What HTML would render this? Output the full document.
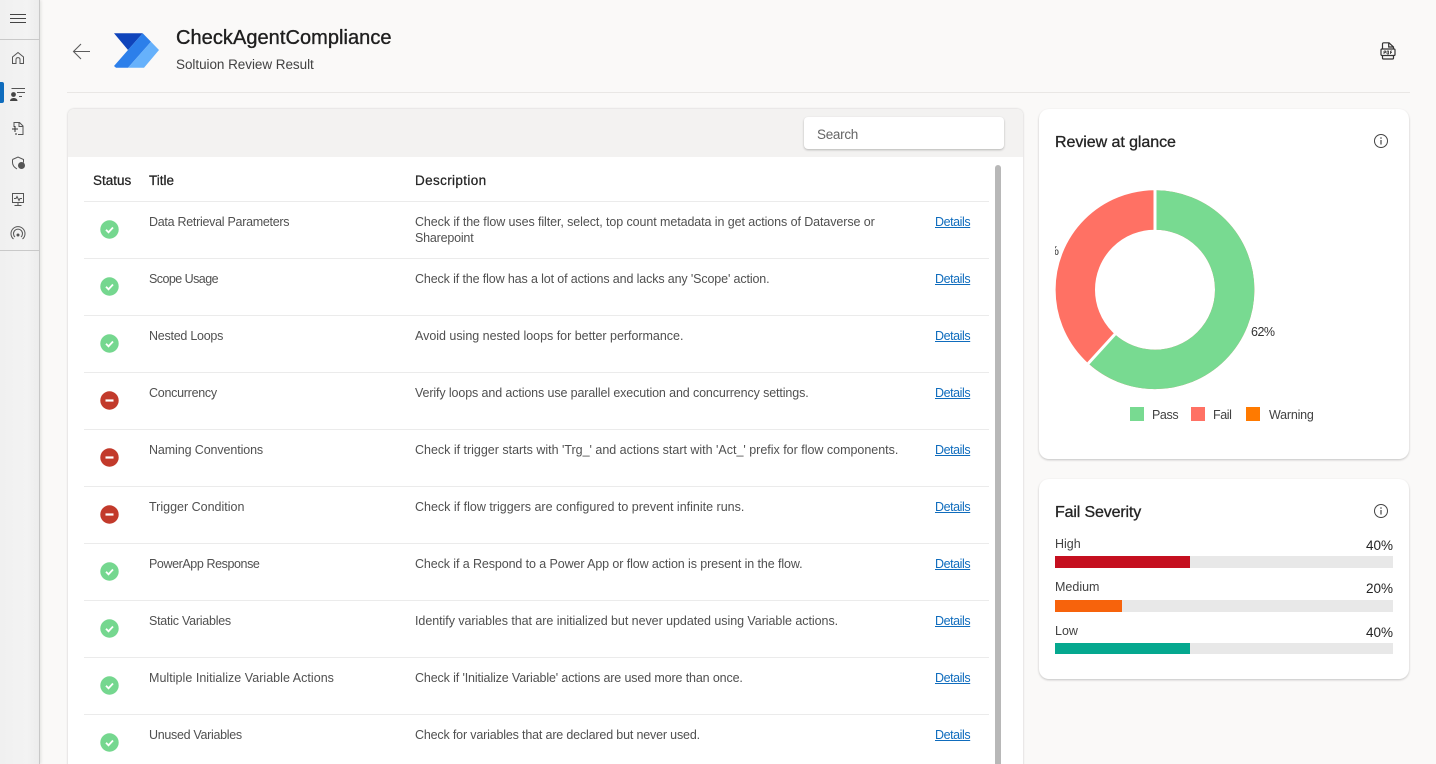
<!DOCTYPE html>
<html><head><meta charset="utf-8">
<style>
html,body{margin:0;padding:0;width:1436px;height:764px;overflow:hidden;background:#faf9f8;font-family:"Liberation Sans",sans-serif;color:#242424}
#w{position:relative;width:1436px;height:764px;overflow:hidden}
.a{position:absolute;white-space:nowrap}
.t{font-size:12.5px;line-height:16px;color:#505050}
.h{font-size:13.5px;line-height:18px;font-weight:400;color:#242424;-webkit-text-stroke:.25px #242424}
.l{height:1px;background:#ebebeb;left:84px;width:905px}
.d{font-size:12.5px;line-height:16px;color:#0f6cbd;text-decoration:underline;left:935px;letter-spacing:-.43px}
.card{background:#fff;border-radius:10px;box-shadow:0 1px 2px rgba(0,0,0,.22)}
.ct{font-size:16px;line-height:22px;color:#242424;-webkit-text-stroke:.3px #242424}
.sm{font-size:12.5px;line-height:16px;color:#424242}
.pc{font-size:13.5px;line-height:18px;color:#242424;text-align:right}
</style></head><body><div id="w">

<!-- sidebar -->
<div class="a" style="left:0;top:0;width:39px;height:764px;background:linear-gradient(90deg,#f0f0f0,#f3f3f3 70%,#ececec);border-right:1px solid #c8c8c8;box-shadow:1px 0 3px rgba(0,0,0,.1)"></div>
<div class="a" style="left:0;top:39px;width:39px;height:1px;background:#c9c9c9"></div>
<div class="a" style="left:0;top:250px;width:39px;height:1px;background:#c9c9c9"></div>
<div class="a" style="left:0;top:82px;width:4px;height:21px;background:#0f6cbd;border-radius:0 2px 2px 0"></div>
<svg class="a" style="left:0;top:0" width="40" height="250" fill="none" stroke="#555" stroke-width="1">
<path d="M10 14.500h16M10 18.500h16M10 22.500h16" stroke="#444"/>
<path d="M12.500 63.500v-6.500l5.500-4.500 5.500 4.500v6.500h-3.500v-4c0-2.500-4-2.500-4 0v4z"/>
<path d="M11.500 88.500h13.500M17 92.500h8M19 96.500h3"/>
<circle cx="13.500" cy="94.500" r="2.400" fill="#444" stroke="none"/><path d="M10 101c0-4 7.500-4 7.500 0z" fill="#444" stroke="none"/>
<path d="M14 127v-4.500h5.500l3.500 3.500v8.500h-5M19 122.500v4h4"/><path d="M15 126v6M12 129h6M16 133v2" stroke="#333"/>
<path d="M12.500 159.500l5.500-2.500 5.500 2.500v3M12.500 159.500v3c0 3 2 5 4.500 6.500"/><circle cx="21.500" cy="165.500" r="3.500" fill="#555" stroke="none"/>
<path d="M12.500 193.500h11v9h-11zM18 202.500v2.500M14.500 205.500h7M14 198.500h2l1-2 2 4 1-2h2"/>
<circle cx="18" cy="235" r="1.500" fill="#555" stroke="none"/><path d="M15 237a4.500 4.500 0 1 1 6 0M13.500 239a7 7 0 1 1 9 0"/>
</svg>

<!-- header -->
<svg class="a" style="left:72px;top:42px" width="20" height="18" fill="none" stroke="#5c5c5c" stroke-width="1.100"><path d="M1.500 9.500H18M9 2L1.500 9.500 9 17"/></svg>
<svg class="a" style="left:113px;top:33px" width="47" height="36">
<polygon points="1,0.300 29.700,0.300 15,17" fill="#0f44bb"/>
<polygon points="29.700,0.300 38,8.700 15,34.700 3,34.700 1,33 15,17" fill="#2c7fea"/>
<polygon points="38,8.700 46,17 31,34.700 15,34.700" fill="#66b1fb"/>
</svg>
<div class="a" style="left:176px;top:25px;font-size:20px;line-height:26px;color:#1f1f1f;-webkit-text-stroke:.35px #1f1f1f;letter-spacing:.05px">CheckAgentCompliance</div>
<div class="a" style="left:176px;top:56px;font-size:13.500px;line-height:18px;color:#424242;letter-spacing:-.05px">Soltuion Review Result</div>
<svg class="a" style="left:1380px;top:42px" width="16" height="18" fill="none" stroke="#333" stroke-width="1.200"><path d="M2.500 7V2c0-.8.500-1.200 1.200-1.200h5.300L13.500 5v2M8.700 1v4h4.800"/><rect x="1" y="7" width="14" height="6.500" rx="1"/><path d="M2.500 13.500v2.500c0 .6.500 1 1 1h9c.5 0 1-.4 1-1v-2.500"/><path d="M4 9v3M7 9v3M10.500 9v3M4 9h1.500v1.500H4M7 9h1.500v3H7M10.500 9H12M10.500 10.500H12" stroke-width=".8"/></svg>
<div class="a" style="left:67px;top:92px;width:1343px;height:1px;background:#e9e7e5"></div>

<!-- table card -->
<div class="a" style="left:68px;top:109px;width:955px;height:660px;background:#fff;border-radius:6px 6px 0 0;box-shadow:0 0 2px rgba(0,0,0,.2)"></div>
<div class="a" style="left:68px;top:109px;width:955px;height:48px;background:#f3f2f1;border-radius:6px 6px 0 0"></div>
<div class="a" style="left:804px;top:117px;width:200px;height:32px;background:#fff;border-radius:4px;box-shadow:0 1px 2px rgba(0,0,0,.25)"></div>
<div class="a" style="left:817px;top:126px;font-size:13.500px;line-height:18px;color:#666;letter-spacing:-.3px">Search</div>
<div class="a" style="left:995px;top:165px;width:6px;height:599px;background:#b8b8b8;border-radius:3px 3px 0 0"></div>

<div class="a h" style="left:93px;top:172px">Status</div>
<div class="a h" style="left:149px;top:172px">Title</div>
<div class="a h" style="left:415px;top:172px;letter-spacing:.36px">Description</div>
<div class="a l" style="top:201px"></div>
<div class="a l" style="top:258px"></div>
<div class="a l" style="top:315px"></div>
<div class="a l" style="top:372px"></div>
<div class="a l" style="top:429px"></div>
<div class="a l" style="top:486px"></div>
<div class="a l" style="top:543px"></div>
<div class="a l" style="top:600px"></div>
<div class="a l" style="top:657px"></div>
<div class="a l" style="top:714px"></div>

<svg class="a" style="left:100px;top:210px" width="20" height="554">
<circle cx="9.500" cy="19.500" r="9.200" fill="#75d78f"/><path d="M6 19.800l2.500 2.500 4.500-4.800" stroke="#fff" stroke-width="1.800" fill="none"/>
<circle cx="9.500" cy="76.500" r="9.200" fill="#75d78f"/><path d="M6 76.800l2.500 2.500 4.500-4.800" stroke="#fff" stroke-width="1.800" fill="none"/>
<circle cx="9.500" cy="133.500" r="9.200" fill="#75d78f"/><path d="M6 133.800l2.500 2.500 4.500-4.800" stroke="#fff" stroke-width="1.800" fill="none"/>
<circle cx="9.500" cy="190.500" r="9.200" fill="#c23a2b"/><path d="M5.500 190.500h8" stroke="#fff" stroke-width="2.200"/>
<circle cx="9.500" cy="247.500" r="9.200" fill="#c23a2b"/><path d="M5.500 247.500h8" stroke="#fff" stroke-width="2.200"/>
<circle cx="9.500" cy="304.500" r="9.200" fill="#c23a2b"/><path d="M5.500 304.500h8" stroke="#fff" stroke-width="2.200"/>
<circle cx="9.500" cy="361.500" r="9.200" fill="#75d78f"/><path d="M6 361.800l2.500 2.500 4.500-4.800" stroke="#fff" stroke-width="1.800" fill="none"/>
<circle cx="9.500" cy="418.500" r="9.200" fill="#75d78f"/><path d="M6 418.800l2.500 2.500 4.500-4.800" stroke="#fff" stroke-width="1.800" fill="none"/>
<circle cx="9.500" cy="475.500" r="9.200" fill="#75d78f"/><path d="M6 475.800l2.500 2.500 4.500-4.800" stroke="#fff" stroke-width="1.800" fill="none"/>
<circle cx="9.500" cy="532.500" r="9.200" fill="#75d78f"/><path d="M6 532.800l2.500 2.500 4.500-4.800" stroke="#fff" stroke-width="1.800" fill="none"/>
</svg>

<div class="a t" style="left:149px;top:214px;letter-spacing:-.28px">Data Retrieval Parameters</div>
<div class="a t" style="left:415px;top:214px;letter-spacing:-.09px">Check if the flow uses filter, select, top count metadata in get actions of Dataverse or</div>
<div class="a t" style="left:415px;top:230px;letter-spacing:-.2px">Sharepoint</div>
<div class="a d" style="top:214px">Details</div>

<div class="a t" style="left:149px;top:271px;letter-spacing:-.55px">Scope Usage</div>
<div class="a t" style="left:415px;top:271px;letter-spacing:-.13px">Check if the flow has a lot of actions and lacks any 'Scope' action.</div>
<div class="a d" style="top:271px">Details</div>

<div class="a t" style="left:149px;top:328px;letter-spacing:-.25px">Nested Loops</div>
<div class="a t" style="left:415px;top:328px;letter-spacing:-.02px">Avoid using nested loops for better performance.</div>
<div class="a d" style="top:328px">Details</div>

<div class="a t" style="left:149px;top:385px;letter-spacing:-.27px">Concurrency</div>
<div class="a t" style="left:415px;top:385px;letter-spacing:-.12px">Verify loops and actions use parallel execution and concurrency settings.</div>
<div class="a d" style="top:385px">Details</div>

<div class="a t" style="left:149px;top:442px;letter-spacing:-.11px">Naming Conventions</div>
<div class="a t" style="left:415px;top:442px;letter-spacing:-.01px">Check if trigger starts with 'Trg_' and actions start with 'Act_' prefix for flow components.</div>
<div class="a d" style="top:442px">Details</div>

<div class="a t" style="left:149px;top:499px">Trigger Condition</div>
<div class="a t" style="left:415px;top:499px">Check if flow triggers are configured to prevent infinite runs.</div>
<div class="a d" style="top:499px">Details</div>

<div class="a t" style="left:149px;top:556px;letter-spacing:-.41px">PowerApp Response</div>
<div class="a t" style="left:415px;top:556px;letter-spacing:-.1px">Check if a Respond to a Power App or flow action is present in the flow.</div>
<div class="a d" style="top:556px">Details</div>

<div class="a t" style="left:149px;top:613px;letter-spacing:-.25px">Static Variables</div>
<div class="a t" style="left:415px;top:613px;letter-spacing:-.05px">Identify variables that are initialized but never updated using Variable actions.</div>
<div class="a d" style="top:613px">Details</div>

<div class="a t" style="left:149px;top:670px;letter-spacing:.03px">Multiple Initialize Variable Actions</div>
<div class="a t" style="left:415px;top:670px;letter-spacing:-.13px">Check if 'Initialize Variable' actions are used more than once.</div>
<div class="a d" style="top:670px">Details</div>

<div class="a t" style="left:149px;top:727px;letter-spacing:-.31px">Unused Variables</div>
<div class="a t" style="left:415px;top:727px;letter-spacing:-.17px">Check for variables that are declared but never used.</div>
<div class="a d" style="top:727px">Details</div>

<!-- review card -->
<div class="a card" style="left:1039px;top:109px;width:370px;height:350px"></div>
<div class="a ct" style="left:1055px;top:132px;letter-spacing:-.06px">Review at glance</div>
<svg class="a" style="left:1373px;top:133px" width="16" height="16" fill="none" stroke="#444" stroke-width="1"><circle cx="8" cy="8" r="6.500"/><path d="M8 7v4.500" stroke-width="1.200"/><circle cx="8" cy="5" r=".8" fill="#444" stroke="none"/></svg>
<svg class="a" style="left:1050px;top:185px" width="210" height="210">
<circle cx="105" cy="104.700" r="79.700" fill="none" stroke="#ff7164" stroke-width="39.400"/>
<circle cx="105" cy="104.700" r="79.700" fill="none" stroke="#78da91" stroke-width="39.400" stroke-dasharray="309.200 500.800" transform="rotate(-90 105 104.700)"/>
<path d="M105 3v44" stroke="#fff" stroke-width="3"/>
<path d="M66 148L36.400 180.500" stroke="#fff" stroke-width="3"/>
</svg>
<div class="a" style="left:1055px;top:243px;width:4px;height:16px;overflow:hidden"><span class="a" style="right:0;font-size:12.500px;line-height:16px;color:#333">38%</span></div>
<div class="a sm" style="left:1251px;top:324px;color:#333;letter-spacing:-.5px">62%</div>
<div class="a" style="left:1130px;top:407px;width:14px;height:14px;background:#78da91"></div>
<div class="a sm" style="left:1152px;top:407px;letter-spacing:-.4px">Pass</div>
<div class="a" style="left:1191px;top:407px;width:14px;height:14px;background:#ff7164"></div>
<div class="a sm" style="left:1213px;top:407px;letter-spacing:-.4px">Fail</div>
<div class="a" style="left:1246px;top:407px;width:14px;height:14px;background:#ff7a00"></div>
<div class="a sm" style="left:1269px;top:407px;letter-spacing:-.2px">Warning</div>

<!-- severity card -->
<div class="a card" style="left:1039px;top:479px;width:370px;height:200px"></div>
<div class="a ct" style="left:1055px;top:502px;letter-spacing:-.15px">Fail Severity</div>
<svg class="a" style="left:1373px;top:503px" width="16" height="16" fill="none" stroke="#444" stroke-width="1"><circle cx="8" cy="8" r="6.500"/><path d="M8 7v4.500" stroke-width="1.200"/><circle cx="8" cy="5" r=".8" fill="#444" stroke="none"/></svg>

<div class="a sm" style="left:1055px;top:536px">High</div>
<div class="a pc" style="left:1333px;width:60px;top:537px">40%</div>
<div class="a" style="left:1055px;top:556px;width:338px;height:12px;background:#e8e8e8"></div>
<div class="a" style="left:1055px;top:556px;width:135px;height:12px;background:#c50f1f"></div>

<div class="a sm" style="left:1055px;top:579px">Medium</div>
<div class="a pc" style="left:1333px;width:60px;top:580px">20%</div>
<div class="a" style="left:1055px;top:600px;width:338px;height:12px;background:#e8e8e8"></div>
<div class="a" style="left:1055px;top:600px;width:67px;height:12px;background:#f7630c"></div>

<div class="a sm" style="left:1055px;top:623px">Low</div>
<div class="a pc" style="left:1333px;width:60px;top:624px">40%</div>
<div class="a" style="left:1055px;top:643px;width:338px;height:11px;background:#e8e8e8"></div>
<div class="a" style="left:1055px;top:643px;width:135px;height:11px;background:#05a88f"></div>

</div></body></html>
